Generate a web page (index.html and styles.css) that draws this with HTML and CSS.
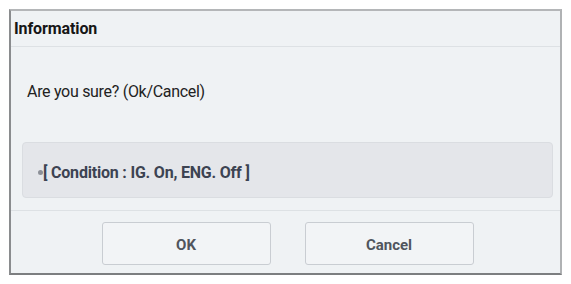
FILE: index.html
```html
<!DOCTYPE html>
<html>
<head>
<meta charset="utf-8">
<link rel="stylesheet" href="styles.css">
</head>
<body>
<div class="dialog">
  <div class="dialog-header">Information</div>
  <div class="dialog-body">
    <p class="message">Are you sure? (Ok/Cancel)</p>
    <div class="condition"><span class="dot"></span><span class="condition-text">[ Condition : IG. On, ENG. Off ]</span></div>
  </div>
  <div class="dialog-footer">
    <button class="btn">OK</button>
    <button class="btn">Cancel</button>
  </div>
</div>
</body>
</html>
```
FILE: styles.css
```css
html, body {
  margin: 0;
  padding: 0;
  background: #ffffff;
}
body {
  padding: 9px 0 0 9px;
  font-family: Roboto, "Liberation Sans", sans-serif;
}
.dialog {
  box-sizing: border-box;
  width: 553px;
  height: 266px;
  background: #eff2f4;
  border-style: solid;
  border-width: 2px;
  border-color: #b4b6b8 #b0b2b4 #7c7e80 #8a8c8e;
  display: flex;
  flex-direction: column;
}
.dialog-header {
  height: 35px;
  border-bottom: 1px solid #dde1e4;
  display: flex;
  align-items: center;
  padding-left: 3px;
  font-size: 16px;
  font-weight: 700;
  color: #161616;
  letter-spacing: -0.1px;
}
.dialog-body {
  padding: 0 7px 0 11px;
  height: 163px;
  border-bottom: 1px solid #dde1e4;
}
.message {
  margin: 36px 0 0 5px;
  font-size: 16px;
  line-height: 18px;
  color: #222222;
  letter-spacing: -0.3px;
}
.condition {
  margin-top: 41px;
  box-sizing: border-box;
  height: 56px;
  background: #e4e6ea;
  border: 1px solid #dadde1;
  border-radius: 4px;
  display: flex;
  align-items: center;
  padding: 5px 0 0 15px;
}
.dot {
  width: 5px;
  height: 5px;
  border-radius: 50%;
  background: #8c9098;
  margin-right: 0px;
}
.condition-text {
  font-size: 16px;
  font-weight: 700;
  color: #3c4352;
  letter-spacing: -0.2px;
}
.dialog-footer {
  flex: 1;
  display: flex;
  justify-content: center;
  gap: 34px;
  padding: 11px 0 0 4px;
  box-sizing: border-box;
}
.btn {
  width: 169px;
  height: 43px;
  background: #f2f4f6;
  border: 1px solid #c9cdd2;
  border-radius: 3px;
  font-family: Roboto, "Liberation Sans", sans-serif;
  font-size: 15px;
  font-weight: 700;
  color: #50555d;
  padding: 0;
  padding-top: 3px;
}
```
